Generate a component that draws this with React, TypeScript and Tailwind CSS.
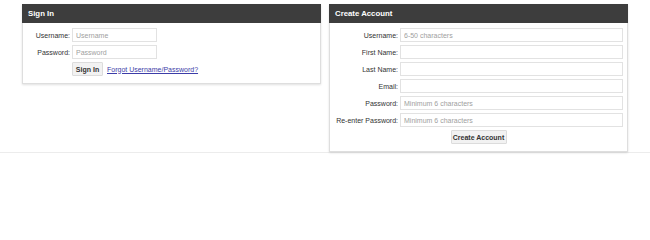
import React from "react";

const font = { fontFamily: '"Liberation Sans", Arial, sans-serif' };

function Row({ label, placeholder, labelW, inputW }: { label: string; placeholder?: string; labelW: string; inputW: string }) {
  return (
    <div className="flex items-center h-[14px]">
      <label className={`${labelW} shrink-0 text-right pr-[2px] text-[7px] text-[#333] leading-none`}>{label}</label>
      <input
        className={`${inputW} h-[14px] border border-[#e2e2e2] bg-white px-[3px] text-[7px] text-[#333] placeholder:text-[#a0a0a0] outline-none`}
        placeholder={placeholder}
        type="text"
      />
    </div>
  );
}

export default function App() {
  return (
    <div style={font} className="w-[650px] h-[204px] bg-white">
      <div className="h-[153px] border-b border-[#ececec] pt-[4px] flex items-start gap-[8px] pl-[22px]">
        {/* Sign In */}
        <div className="w-[299px] shadow-[0_1px_2px_rgba(0,0,0,0.12)]">
          <div className="h-[19px] bg-[#3d3d3d] text-white font-bold text-[7.8px] flex items-center pl-[6px]">Sign In</div>
          <div className="border border-t-0 border-[#dedede] bg-white pt-[5px] pb-[7px] flex flex-col gap-[3px]">
            <Row label="Username:" placeholder="Username" labelW="w-[49px]" inputW="w-[85px]" />
            <Row label="Password:" placeholder="Password" labelW="w-[49px]" inputW="w-[85px]" />
            <div className="flex items-center h-[14px] pl-[49px]">
              <button className="h-[14px] w-[31px] bg-[#f2f2f2] border border-[#dcdcdc] rounded-[1px] text-[7px] font-bold text-[#333] leading-none">Sign In</button>
              <a href="#" className="ml-[4px] text-[7px] text-[#3c3ca8] underline leading-none">Forgot Username/Password?</a>
            </div>
          </div>
        </div>
        {/* Create Account */}
        <div className="w-[299px] shadow-[0_1px_2px_rgba(0,0,0,0.12)]">
          <div className="h-[19px] bg-[#3d3d3d] text-white font-bold text-[7.8px] flex items-center pl-[6px]">Create Account</div>
          <div className="border border-t-0 border-[#dedede] bg-white pt-[5px] pb-[7px] flex flex-col gap-[3px]">
            <Row label="Username:" placeholder="6-50 characters" labelW="w-[70px]" inputW="w-[223px]" />
            <Row label="First Name:" labelW="w-[70px]" inputW="w-[223px]" />
            <Row label="Last Name:" labelW="w-[70px]" inputW="w-[223px]" />
            <Row label="Email:" labelW="w-[70px]" inputW="w-[223px]" />
            <Row label="Password:" placeholder="Minimum 6 characters" labelW="w-[70px]" inputW="w-[223px]" />
            <Row label="Re-enter Password:" placeholder="Minimum 6 characters" labelW="w-[70px]" inputW="w-[223px]" />
            <div className="flex justify-center h-[14px]">
              <button className="h-[14px] w-[56px] bg-[#f2f2f2] border border-[#dcdcdc] rounded-[1px] text-[7px] font-bold text-[#333] leading-none">Create Account</button>
            </div>
          </div>
        </div>
      </div>
    </div>
  );
}
